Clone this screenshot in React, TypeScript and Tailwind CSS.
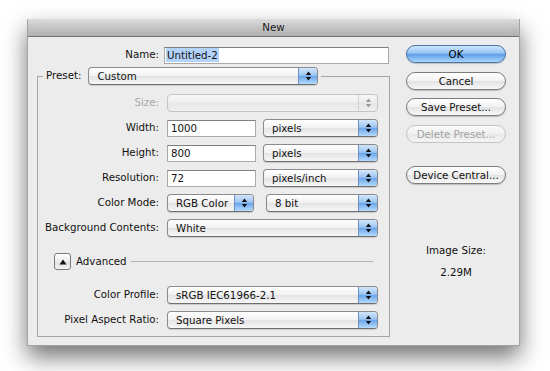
import React from 'react';

const Arrows = ({ disabled = false }: { disabled?: boolean }) => (
  <svg width="7" height="10" viewBox="0 0 7 10">
    <path d="M3.5 0.5 L6.2 4 L0.8 4 Z" fill={disabled ? '#9a9a9a' : '#111'} />
    <path d="M3.5 9.5 L6.2 6 L0.8 6 Z" fill={disabled ? '#9a9a9a' : '#111'} />
  </svg>
);

const Select = ({ value, width, disabled = false }: { value: string; width: string; disabled?: boolean }) => (
  <div
    className={`${width} h-[18px] flex items-stretch rounded-[4px] border overflow-hidden ${
      disabled
        ? 'border-[#c4c4c4] bg-[linear-gradient(#f7f7f7,#ececec_50%,#e6e6e6_51%,#f0f0f0)]'
        : 'border-[#8b8b8b] border-b-[#6f6f6f] bg-[linear-gradient(#ffffff,#f1f1f1_50%,#e3e3e3_51%,#f7f7f7)] shadow-[0_1px_1px_rgba(0,0,0,0.15)]'
    }`}
  >
    <div className="flex-1 flex items-center pl-[8px] leading-none whitespace-nowrap">{value}</div>
    <div
      className={`w-[19px] flex items-center justify-center border-l ${
        disabled
          ? 'border-[#d0d0d0]'
          : 'border-[#6a8fc5] bg-[linear-gradient(#d2e6fb,#9ec6f2_45%,#6aa6ea_52%,#b6dafd)]'
      }`}
    >
      <Arrows disabled={disabled} />
    </div>
  </div>
);

const Input = ({ value, width }: { value: string; width: string }) => (
  <div className={`${width} h-[17px] bg-white border border-[#a9a9a9] border-t-[#7f7f7f] flex items-center pl-[3px] leading-none`}>
    {value}
  </div>
);

const Button = ({ label, primary = false, disabled = false }: { label: string; primary?: boolean; disabled?: boolean }) => (
  <div
    className={`w-[100px] h-[18px] rounded-full border flex items-center justify-center leading-none ${
      primary
        ? 'border-[#4f74a8] bg-[linear-gradient(#cfe5fc,#95c3f3_45%,#5f9ee9_52%,#a9d5fc)] text-black shadow-[0_1px_1px_rgba(0,0,0,0.2)]'
        : disabled
        ? 'border-[#c3c3c3] bg-[linear-gradient(#fafafa,#efefef_50%,#e8e8e8_51%,#f4f4f4)] text-[#a3a3a3]'
        : 'border-[#7c7c7c] bg-[linear-gradient(#ffffff,#f1f1f1_50%,#e2e2e2_51%,#f8f8f8)] shadow-[0_1px_1px_rgba(0,0,0,0.2)]'
    }`}
  >
    {label}
  </div>
);

const Row = ({ label, disabled = false, children }: { label: string; disabled?: boolean; children: React.ReactNode }) => (
  <div className="flex items-center h-[18px] gap-[8px]">
    <div className={`w-[121px] text-right whitespace-nowrap ${disabled ? 'text-[#a6a6a6]' : ''}`}>{label}</div>
    {children}
  </div>
);

export default function App() {
  return (
    <div className="w-[550px] h-[371px] bg-white pt-[19px] pl-[27px] font-['DejaVu_Sans',sans-serif] text-[10.25px] text-[#111]">
      <div className="w-[493px] h-[327px] bg-[#ececec] border-x border-b border-[#a3a3a3] shadow-[0_11px_22px_rgba(0,0,0,0.55)] flex flex-col">
        <div className="h-[18px] shrink-0 flex items-center justify-center border-b border-[#727272] bg-[linear-gradient(#dcdcdc,#c4c4c4_50%,#b1b1b1)] text-[#1a1a1a]">
          New
        </div>
        <div className="flex flex-1">
          {/* left column */}
          <div className="w-[362px] pl-[9px] pt-[10px]">
            <div className="flex items-center h-[16px]">
              <div className="w-[122px] text-right">Name:</div>
              <div className="ml-[5px] w-[225px] h-[17px] bg-white border border-[#a9a9a9] border-t-[#7f7f7f] flex items-center pl-[1px] leading-none">
                <span className="bg-[#b4d3fb] px-[1px] py-[2px]">Untitled-2</span>
              </div>
            </div>

            <fieldset className="mt-[4px] w-[353px] border border-[#a6a6a6] pb-[7px]">
              <legend className="ml-[5px] px-[3px]">
                <div className="flex items-center gap-[7px]">
                  <span>Preset:</span>
                  <Select value="Custom" width="w-[230px]" />
                </div>
              </legend>
              <div className="flex flex-col gap-[7px] pt-[9px]">
                <Row label="Size:" disabled>
                  <Select value="" width="w-[211px]" disabled />
                </Row>
                <Row label="Width:">
                  <Input value="1000" width="w-[89px]" />
                  <div className="ml-[-1px]">
                    <Select value="pixels" width="w-[115px]" />
                  </div>
                </Row>
                <Row label="Height:">
                  <Input value="800" width="w-[89px]" />
                  <div className="ml-[-1px]">
                    <Select value="pixels" width="w-[115px]" />
                  </div>
                </Row>
                <Row label="Resolution:">
                  <Input value="72" width="w-[89px]" />
                  <div className="ml-[-1px]">
                    <Select value="pixels/inch" width="w-[115px]" />
                  </div>
                </Row>
                <Row label="Color Mode:">
                  <Select value="RGB Color" width="w-[87px]" />
                  <div className="ml-[4px]">
                    <Select value="8 bit" width="w-[112px]" />
                  </div>
                </Row>
                <Row label="Background Contents:">
                  <Select value="White" width="w-[211px]" />
                </Row>
              </div>

              <div className="flex items-center h-[17px] mt-[16px] pl-[16px]">
                <div className="w-[17px] h-[17px] rounded-[3px] border border-[#7a7a7a] bg-[linear-gradient(#ffffff,#ececec_50%,#dedede_51%,#f3f3f3)] flex items-center justify-center">
                  <svg width="8" height="6" viewBox="0 0 8 6">
                    <path d="M4 0.5 L7.5 5.5 L0.5 5.5 Z" fill="#111" />
                  </svg>
                </div>
                <span className="ml-[5px]">Advanced</span>
                <div className="ml-[4px] w-[242px] h-px bg-[#b4b4b4]" />
              </div>

              <div className="flex flex-col gap-[7px] mt-[16px]">
                <Row label="Color Profile:">
                  <Select value="sRGB IEC61966-2.1" width="w-[211px]" />
                </Row>
                <Row label="Pixel Aspect Ratio:">
                  <Select value="Square Pixels" width="w-[211px]" />
                </Row>
              </div>
            </fieldset>
          </div>

          {/* right column */}
          <div className="flex-1 pl-[16px] pt-[8px] flex flex-col">
            <Button label="OK" primary />
            <div className="mt-[9px]">
              <Button label="Cancel" />
            </div>
            <div className="mt-[8px]">
              <Button label="Save Preset..." />
            </div>
            <div className="mt-[9px]">
              <Button label="Delete Preset..." disabled />
            </div>
            <div className="mt-[23px]">
              <Button label="Device Central..." />
            </div>
            <div className="w-[100px] mt-[60px] flex flex-col items-center gap-[9px] leading-[13px]">
              <span>Image Size:</span>
              <span>2.29M</span>
            </div>
          </div>
        </div>
      </div>
    </div>
  );
}
